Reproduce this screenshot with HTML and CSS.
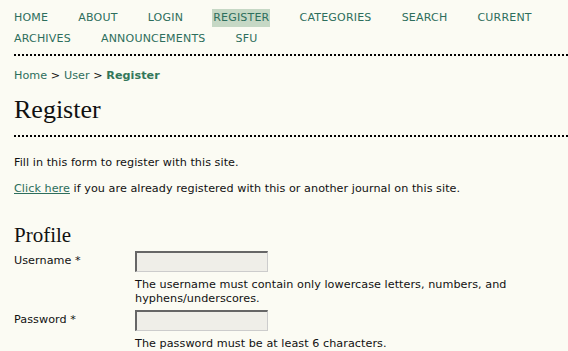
FILE: index.html
```html
<!DOCTYPE html>
<html>
<head>
<meta charset="utf-8">
<title>Register</title>
<link rel="stylesheet" href="styles.css">
</head>
<body>
<div class="page">
  <ul class="navbar">
    <li><a href="#">Home</a></li>
    <li><a href="#">About</a></li>
    <li><a href="#">Login</a></li>
    <li><a href="#" class="current">Register</a></li>
    <li><a href="#">Categories</a></li>
    <li><a href="#">Search</a></li>
    <li><a href="#">Current</a></li>
    <li><a href="#">Archives</a></li>
    <li><a href="#">Announcements</a></li>
    <li><a href="#">SFU</a></li>
  </ul>
  <div class="breadcrumb">
    <a href="#">Home</a> &gt; <a href="#">User</a> &gt; <a href="#" class="crumb-current">Register</a>
  </div>
  <h1 class="title">Register</h1>
  <div class="content">
    <p class="intro">Fill in this form to register with this site.</p>
    <p class="intro2"><a href="#" class="link">Click here</a> if you are already registered with this or another journal on this site.</p>
    <h2 class="section">Profile</h2>
    <div class="form">
      <label class="label">Username *</label>
      <div class="field">
        <input type="text" class="textfield">
        <div class="instruct">The username must contain only lowercase letters, numbers, and hyphens/underscores.</div>
      </div>
      <label class="label">Password *</label>
      <div class="field">
        <input type="password" class="textfield">
        <div class="instruct">The password must be at least 6 characters.</div>
      </div>
    </div>
  </div>
</div>
</body>
</html>
```
FILE: styles.css
```css
html, body {
  margin: 0;
  padding: 0;
  background: #fbfbf3;
}
body {
  font-family: "DejaVu Sans", Verdana, sans-serif;
  font-size: 11.2px;
  letter-spacing: 0.05px;
  color: #111;
}
.page {
  padding-left: 14px;
}
.navbar {
  list-style: none;
  margin: 0;
  padding: 7px 14px 5px 0;
  display: flex;
  flex-wrap: wrap;
  column-gap: 30.1px;
  line-height: 21px;
  font-size: 11px;
  letter-spacing: 0.2px;
  border-bottom: 2px dotted #000;
}
.navbar li {
  margin: 0;
}
.navbar a {
  color: #2d6e5c;
  text-decoration: none;
  text-transform: uppercase;
}
.navbar a.current {
  background: #c6d8c5;
  padding: 2px 1px 3px 1px;
  margin: 0 -1px;
}
.breadcrumb {
  padding-top: 13px;
  line-height: 14px;
  color: #111;
}
.breadcrumb a {
  color: #2d6e5c;
  text-decoration: none;
}
.breadcrumb a.crumb-current {
  font-weight: bold;
  color: #33775a;
}
.title {
  font-family: "Liberation Serif", "Times New Roman", serif;
  font-weight: normal;
  font-size: 26px;
  line-height: 30px;
  letter-spacing: 0;
  margin: 12px 0 0 0;
  padding-bottom: 10px;
  border-bottom: 2px dotted #000;
}
.content {
  padding-right: 14px;
}
.intro {
  margin: 19px 0 0 0;
  line-height: 14px;
}
.intro2 {
  margin: 12px 0 0 0;
  line-height: 14px;
}
.link {
  color: #2d6e5c;
}
.section {
  font-family: "Liberation Serif", "Times New Roman", serif;
  font-weight: normal;
  font-size: 21px;
  line-height: 24px;
  letter-spacing: 0;
  margin: 27px 0 0 0;
}
.form {
  display: grid;
  grid-template-columns: 121px 1fr;
  row-gap: 4px;
  margin-top: 4px;
}
.label {
  line-height: 14px;
  padding-top: 3px;
}
.field {
  display: flex;
  flex-direction: column;
  align-items: flex-start;
}
.textfield {
  box-sizing: border-box;
  width: 133px;
  height: 21px;
  margin: 0;
  padding: 0;
  background: #efeee8;
  border-style: solid;
  border-width: 2px 1px 1px 2px;
  border-color: #666 #ccc #ccc #666;
}
.instruct {
  line-height: 14px;
  margin-top: 6px;
  color: #111;
}
```
